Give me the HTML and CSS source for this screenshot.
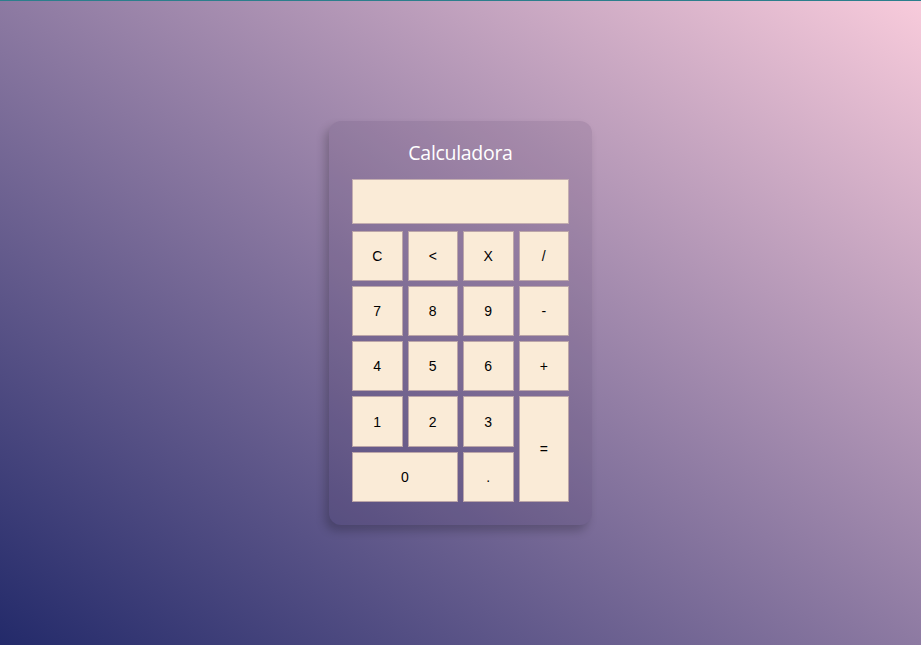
FILE: index.html
```html
<!DOCTYPE html>
<html lang="es">
<head>
<meta charset="utf-8">
<title>Calculadora</title>
<link rel="stylesheet" href="styles.css">
</head>
<body>
<main class="calc">
  <h1 class="title">Calculadora</h1>
  <div class="display"></div>
  <div class="keys">
    <button class="key">C</button>
    <button class="key">&lt;</button>
    <button class="key">X</button>
    <button class="key">/</button>
    <button class="key">7</button>
    <button class="key">8</button>
    <button class="key">9</button>
    <button class="key">-</button>
    <button class="key">4</button>
    <button class="key">5</button>
    <button class="key">6</button>
    <button class="key">+</button>
    <button class="key">1</button>
    <button class="key">2</button>
    <button class="key">3</button>
    <button class="key key-eq">=</button>
    <button class="key key-zero">0</button>
    <button class="key">.</button>
  </div>
</main>
</body>
</html>
```
FILE: styles.css
```css
html, body {
  margin: 0;
  height: 100%;
}
body {
  box-sizing: border-box;
  border-top: 1px solid #2c7e8c;
  background: linear-gradient(to top right, #232a6a 0%, #8d7aa2 50%, #f8cbdb 100%);
  display: flex;
  align-items: center;
  justify-content: center;
  font-family: "Liberation Sans", Arial, sans-serif;
}
.calc {
  box-sizing: border-box;
  width: 263px;
  padding: 17px 23px 23px;
  border-radius: 12px;
  background: rgba(40, 20, 60, 0.1);
  box-shadow: -4px 6px 10px rgba(0, 0, 0, 0.22);
}
.title {
  margin: 0 0 11px;
  font-family: "Open Sans", "Noto Sans", sans-serif;
  font-weight: 500;
  font-size: 19.5px;
  letter-spacing: -0.3px;
  line-height: 30px;
  color: #ffffff;
  text-align: center;
}
.display {
  box-sizing: border-box;
  height: 45px;
  background: #faebd7;
  border: 1px solid #c3adb0;
  margin-bottom: 6.5px;
}
.keys {
  display: grid;
  grid-template-columns: repeat(4, 1fr);
  grid-auto-rows: 50.25px;
  gap: 5px;
}
.key {
  box-sizing: border-box;
  margin: 0;
  padding: 0;
  background: #faebd7;
  border: 1px solid #bba5a8;
  font-family: "Liberation Sans", Arial, sans-serif;
  font-size: 14px;
  color: #000;
}
.key-eq {
  grid-column: 4;
  grid-row: 4 / span 2;
}
.key-zero {
  grid-column: 1 / span 2;
}
```
